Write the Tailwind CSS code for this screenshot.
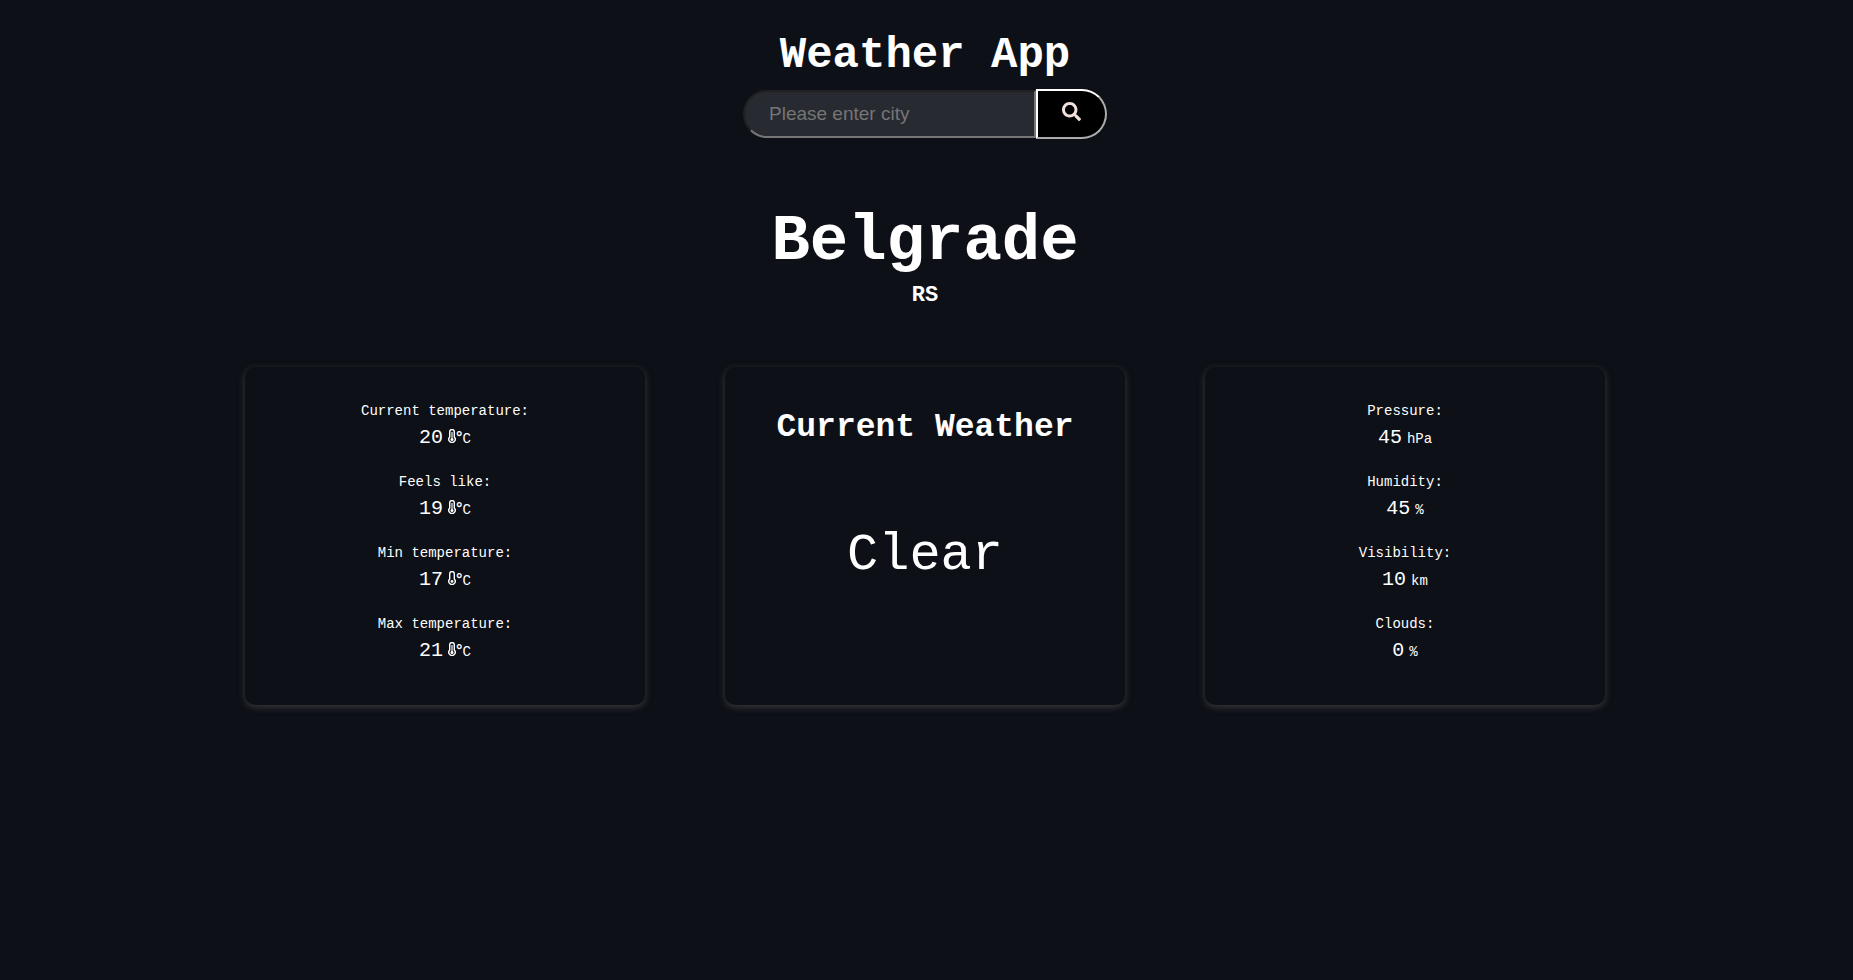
<!DOCTYPE html>
<html lang="en">
<head>
<meta charset="utf-8">
<meta name="viewport" content="width=device-width, initial-scale=1">
<title>Weather App</title>
<script src="https://cdn.jsdelivr.net/npm/@tailwindcss/browser@4"></script>
</head>
<body class="min-h-screen bg-[#0d1017] pr-[3px] text-center font-['Liberation_Mono',monospace] text-white">
<svg class="hidden" aria-hidden="true">
  <symbol id="thermometer" viewBox="0 0 8 14">
    <path d="M1.7 8V2.8a2.3 2.3 0 0 1 4.6 0V8a3.2 3.2 0 1 1-4.6 0z" fill="none" stroke="currentColor" stroke-width="1.4"/>
    <path d="M4 3v7" stroke="#999" stroke-width="2"/>
    <circle cx="4" cy="10.4" r="1.5" fill="currentColor"/>
  </symbol>
  <symbol id="thermometer-low" viewBox="0 0 8 14">
    <path d="M1.7 8V2.8a2.3 2.3 0 0 1 4.6 0V8a3.2 3.2 0 1 1-4.6 0z" fill="none" stroke="currentColor" stroke-width="1.4"/>
    <circle cx="4" cy="10.4" r="1.4" fill="currentColor"/>
  </symbol>
</svg>

<header class="flex flex-col items-center pt-[31px]">
  <h1 class="text-[44px] leading-[48px] font-bold">Weather App</h1>
  <form class="mt-[10px] flex items-center" onsubmit="return false">
    <input type="text" aria-label="City" placeholder="Please enter city" class="h-12 w-[293px] rounded-l-full border-2 border-[#767676] bg-[#282a31] pr-2 pl-6 font-['Liberation_Sans',sans-serif] text-[19px] text-white [border-style:inset] placeholder:text-[#757575]">
    <button type="submit" aria-label="Search" class="flex h-[50px] w-[71px] justify-center rounded-r-full border-2 border-white bg-black pt-[11px] text-[#f2e1da] [border-style:outset]">
      <svg class="size-[19px]" viewBox="0 0 512 512" fill="currentColor" aria-hidden="true"><path d="M505 442.700L405.300 343c-4.500-4.500-10.600-7-17-7H372c27.600-35.300 44-79.700 44-128C416 93.100 322.900 0 208 0S0 93.100 0 208s93.100 208 208 208c48.300 0 92.700-16.400 128-44v16.300c0 6.400 2.500 12.500 7 17l99.700 99.700c9.400 9.400 24.600 9.400 33.900 0l28.300-28.300c9.400-9.400 9.400-24.600.1-34zM208 336c-70.700 0-128-57.200-128-128 0-70.700 57.200-128 128-128 70.700 0 128 57.200 128 128 0 70.700-57.200 128-128 128z"/></svg>
    </button>
  </form>
</header>

<main>
  <h2 class="mt-[67px] text-[64px] leading-[72px] font-bold">Belgrade</h2>
  <h3 class="mt-1 text-[22px] leading-7 font-bold">RS</h3>

  <div class="mt-[57px] flex flex-wrap justify-center gap-20">
    <section class="w-full max-w-[400px] rounded-[10px] bg-[#0d1017] pt-[33px] pb-px shadow-[0_2px_7px_#3a3a3a]">
      <dl class="text-sm leading-[22px]">
        <div class="mb-[18px]"><dt>Current temperature:</dt><dd class="mt-px flex h-[30px] items-baseline justify-center leading-[30px]"><span class="mr-[5px] text-xl leading-[30px]">20</span><svg class="h-[14px] w-2" role="img" aria-label="thermometer"><use href="#thermometer"/></svg><span class="font-['Liberation_Sans',sans-serif] text-base leading-[30px] font-bold">°</span>C</dd></div>
        <div class="mb-[18px]"><dt>Feels like:</dt><dd class="mt-px flex h-[30px] items-baseline justify-center leading-[30px]"><span class="mr-[5px] text-xl leading-[30px]">19</span><svg class="h-[14px] w-2" role="img" aria-label="thermometer"><use href="#thermometer"/></svg><span class="font-['Liberation_Sans',sans-serif] text-base leading-[30px] font-bold">°</span>C</dd></div>
        <div class="mb-[18px]"><dt>Min temperature:</dt><dd class="mt-px flex h-[30px] items-baseline justify-center leading-[30px]"><span class="mr-[5px] text-xl leading-[30px]">17</span><svg class="h-[14px] w-2" role="img" aria-label="thermometer"><use href="#thermometer-low"/></svg><span class="font-['Liberation_Sans',sans-serif] text-base leading-[30px] font-bold">°</span>C</dd></div>
        <div class="mb-[38px]"><dt>Max temperature:</dt><dd class="mt-px flex h-[30px] items-baseline justify-center leading-[30px]"><span class="mr-[5px] text-xl leading-[30px]">21</span><svg class="h-[14px] w-2" role="img" aria-label="thermometer"><use href="#thermometer"/></svg><span class="font-['Liberation_Sans',sans-serif] text-base leading-[30px] font-bold">°</span>C</dd></div>
      </dl>
    </section>

    <section class="w-full max-w-[400px] rounded-[10px] bg-[#0d1017] pt-[41px] shadow-[0_2px_7px_#3a3a3a]">
      <h2 class="text-[33px] leading-10 font-bold">Current Weather</h2>
      <p class="mt-[78px] text-[52px] leading-[60px]">Clear</p>
    </section>

    <section class="w-full max-w-[400px] rounded-[10px] bg-[#0d1017] pt-[33px] pb-px shadow-[0_2px_7px_#3a3a3a]">
      <dl class="text-sm leading-[22px]">
        <div class="mb-[18px]"><dt>Pressure:</dt><dd class="mt-px flex h-[30px] items-baseline justify-center gap-[5px] leading-[30px]"><span class="text-xl leading-[30px]">45</span><span>hPa</span></dd></div>
        <div class="mb-[18px]"><dt>Humidity:</dt><dd class="mt-px flex h-[30px] items-baseline justify-center gap-[5px] leading-[30px]"><span class="text-xl leading-[30px]">45</span><span>%</span></dd></div>
        <div class="mb-[18px]"><dt>Visibility:</dt><dd class="mt-px flex h-[30px] items-baseline justify-center gap-[5px] leading-[30px]"><span class="text-xl leading-[30px]">10</span><span>km</span></dd></div>
        <div class="mb-[38px]"><dt>Clouds:</dt><dd class="mt-px flex h-[30px] items-baseline justify-center gap-[5px] leading-[30px]"><span class="text-xl leading-[30px]">0</span><span>%</span></dd></div>
      </dl>
    </section>
  </div>
</main>
</body>
</html>
